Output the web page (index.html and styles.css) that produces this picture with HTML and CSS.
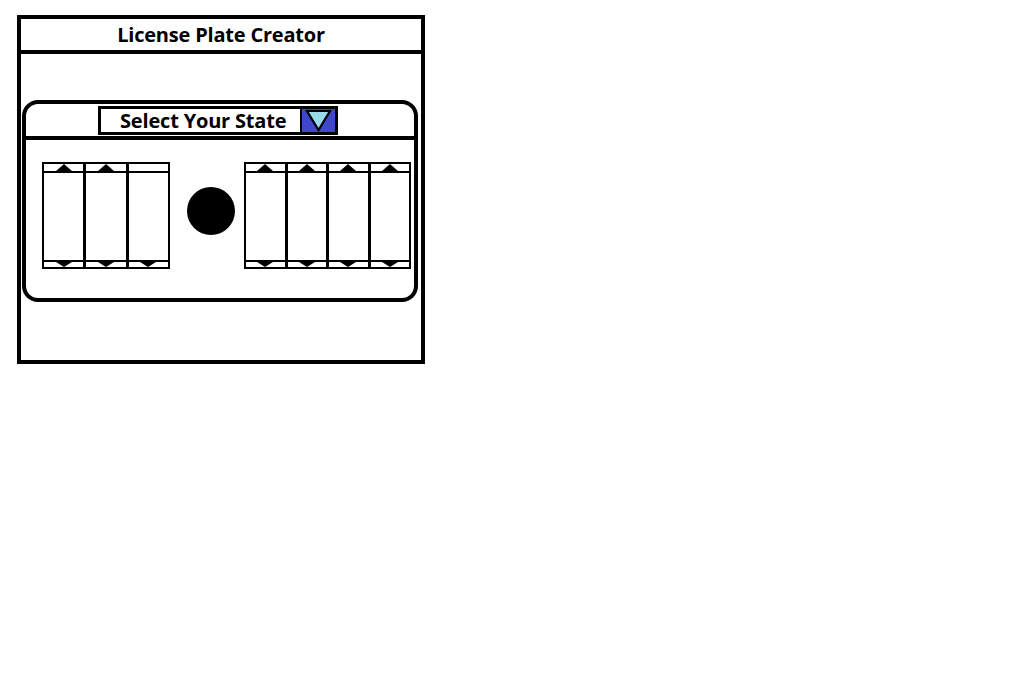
FILE: index.html
```html
<!DOCTYPE html>
<html lang="en">
<head>
<meta charset="utf-8">
<title>License Plate Creator</title>
<link rel="stylesheet" href="styles.css">
</head>
<body>
<div class="frame">
  <div class="header">License Plate Creator</div>
  <div class="plate">
    <div class="plate-top">
      <div class="dropdown">
        <div class="label">Select Your State</div>
        <div class="button">
          <svg width="33" height="23" viewBox="0 0 33 23"><polygon points="5,2 28,2 16.5,21" fill="#99d9ea" stroke="#000" stroke-width="2.2" stroke-linejoin="miter"/></svg>
        </div>
      </div>
    </div>
    <div class="reels-row">
      <div class="group group-left">
        <div class="reel"><div class="strip-top"><span class="tri-up"></span></div><div class="reel-body"></div><div class="strip-bottom"><span class="tri-down"></span></div></div>
        <div class="reel"><div class="strip-top"><span class="tri-up"></span></div><div class="reel-body"></div><div class="strip-bottom"><span class="tri-down"></span></div></div>
        <div class="reel"><div class="strip-top"></div><div class="reel-body"></div><div class="strip-bottom"><span class="tri-down"></span></div></div>
      </div>
      <div class="circle"></div>
      <div class="group group-right">
        <div class="reel"><div class="strip-top"><span class="tri-up"></span></div><div class="reel-body"></div><div class="strip-bottom"><span class="tri-down"></span></div></div>
        <div class="reel"><div class="strip-top"><span class="tri-up"></span></div><div class="reel-body"></div><div class="strip-bottom"><span class="tri-down"></span></div></div>
        <div class="reel"><div class="strip-top"><span class="tri-up"></span></div><div class="reel-body"></div><div class="strip-bottom"><span class="tri-down"></span></div></div>
        <div class="reel"><div class="strip-top"><span class="tri-up"></span></div><div class="reel-body"></div><div class="strip-bottom"><span class="tri-down"></span></div></div>
      </div>
    </div>
  </div>
</div>
</body>
</html>
```
FILE: styles.css
```css
html, body {
  margin: 0;
  padding: 0;
  background: #fff;
}
body {
  font-family: "Open Sans", "Noto Sans", sans-serif;
  color: #000;
}
.frame {
  margin: 15px 0 0 17px;
  width: 408px;
  height: 349px;
  border: 4px solid #000;
  box-sizing: border-box;
}
.header {
  height: 35px;
  box-sizing: border-box;
  border-bottom: 4px solid #000;
  padding-top: 1px;
  text-align: center;
  font-weight: 700;
  font-size: 20px;
  line-height: 30px;
  letter-spacing: -0.2px;
}
.plate {
  margin: 46px 3px 0 1px;
  height: 202px;
  border: 4px solid #000;
  border-radius: 16px;
  box-sizing: border-box;
}
.plate-top {
  height: 36px;
  box-sizing: border-box;
  border-bottom: 4px solid #000;
  padding: 2px 0 0 72px;
}
.dropdown {
  display: flex;
  width: 240px;
  height: 29px;
  box-sizing: border-box;
  border: 3px solid #000;
}
.label {
  width: 199px;
  box-sizing: border-box;
  padding-left: 19px;
  font-weight: 700;
  font-size: 20px;
  line-height: 23px;
  letter-spacing: -0.18px;
  white-space: nowrap;
}
.button {
  width: 35px;
  box-sizing: border-box;
  border-left: 2px solid #000;
  background: #3f48cc;
  display: flex;
  align-items: center;
  justify-content: center;
}
.button svg {
  display: block;
}
.reels-row {
  display: flex;
  align-items: flex-start;
  padding-left: 16px;
}
.group {
  margin-top: 22px;
  display: flex;
  height: 107px;
  box-sizing: border-box;
  border: 2px solid #000;
}
.group-left {
  width: 128px;
}
.group-right {
  width: 167px;
  margin-left: 9px;
}
.reel {
  flex: 1;
  display: flex;
  flex-direction: column;
}
.reel + .reel {
  border-left: 3px solid #000;
}
.strip-top {
  height: 9px;
  box-sizing: border-box;
  border-bottom: 2px solid #000;
  display: flex;
  justify-content: center;
  align-items: flex-end;
}
.reel-body {
  flex: 1;
}
.strip-bottom {
  height: 7px;
  box-sizing: border-box;
  border-top: 2px solid #000;
  display: flex;
  justify-content: center;
  align-items: flex-start;
}
.tri-up {
  width: 0;
  height: 0;
  border-left: 8px solid transparent;
  border-right: 8px solid transparent;
  border-bottom: 7px solid #000;
}
.tri-down {
  width: 0;
  height: 0;
  border-left: 8px solid transparent;
  border-right: 8px solid transparent;
  border-top: 5px solid #000;
}
.circle {
  width: 48px;
  height: 48px;
  border-radius: 50%;
  background: #000;
  margin-top: 47px;
  margin-left: 17px;
}
```
